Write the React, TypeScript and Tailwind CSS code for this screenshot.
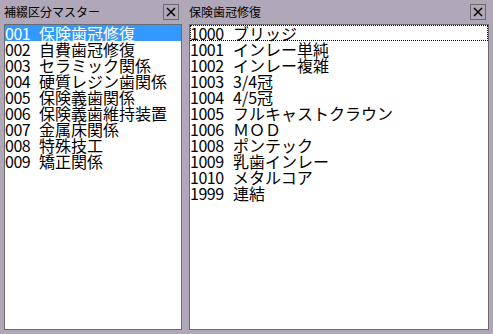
import React from 'react';

const categories = [
  { code: '001', name: '保険歯冠修復' },
  { code: '002', name: '自費歯冠修復' },
  { code: '003', name: 'セラミック関係' },
  { code: '004', name: '硬質レジン歯関係' },
  { code: '005', name: '保険義歯関係' },
  { code: '006', name: '保険義歯維持装置' },
  { code: '007', name: '金属床関係' },
  { code: '008', name: '特殊技工' },
  { code: '009', name: '矯正関係' },
];

const items = [
  { code: '1000', name: 'ブリッジ' },
  { code: '1001', name: 'インレー単純' },
  { code: '1002', name: 'インレー複雑' },
  { code: '1003', name: '3/4冠' },
  { code: '1004', name: '4/5冠' },
  { code: '1005', name: 'フルキャストクラウン' },
  { code: '1006', name: 'ＭＯＤ' },
  { code: '1008', name: 'ポンテック' },
  { code: '1009', name: '乳歯インレー' },
  { code: '1010', name: 'メタルコア' },
  { code: '1999', name: '連結' },
];

const font = "font-['Noto_Sans_CJK_JP',sans-serif]";

function CloseButton() {
  return (
    <div className="mt-[0px] flex h-[16px] w-[16px] items-center justify-center border border-[#6b6b6b]">
      <svg width="10" height="10" viewBox="0 0 10 10">
        <path d="M1 1 L9 9 M9 1 L1 9" stroke="#000" strokeWidth="1.5" />
      </svg>
    </div>
  );
}

function PanelHeader({ title }: { title: string }) {
  return (
    <div className="flex h-[20px] items-start justify-between pr-[3px]">
      <span className="pt-[1px] text-[12px] leading-[14px] text-black">{title}</span>
      <CloseButton />
    </div>
  );
}

export default function App() {
  return (
    <div className={`flex h-[334px] w-[493px] gap-[7px] bg-[#b0a8b8] p-[4px] ${font}`}>
      {/* 補綴区分 list */}
      <div className="flex w-[178px] flex-col">
        <PanelHeader title="補綴区分マスター" />
        <div className="flex-1 border border-[#6b6b6b] bg-white">
          {categories.map((c, i) => (
            <div
              key={c.code}
              className={`flex h-[16px] items-center text-[16px] leading-[16px] ${
                i === 0 ? 'bg-[#3399ff] text-white' : 'text-black'
              }`}
            >
              <span className="w-[34px] shrink-0 tracking-[-0.5px]">{c.code}</span>
              <span className="whitespace-nowrap">{c.name}</span>
            </div>
          ))}
        </div>
      </div>

      {/* 保険歯冠修復 list */}
      <div className="flex flex-1 flex-col pr-[0px]">
        <PanelHeader title="保険歯冠修復" />
        <div className="flex-1 border border-[#6b6b6b] bg-white">
          {items.map((it, i) => (
            <div
              key={it.code}
              className={`flex h-[16px] items-center text-[16px] leading-[16px] text-black ${
                i === 0 ? 'outline-1 outline-offset-[-1px] outline-dotted outline-black' : ''
              }`}
            >
              <span className="w-[43px] shrink-0 tracking-[-0.5px]">{it.code}</span>
              <span className="whitespace-nowrap">{it.name}</span>
            </div>
          ))}
        </div>
      </div>
    </div>
  );
}
